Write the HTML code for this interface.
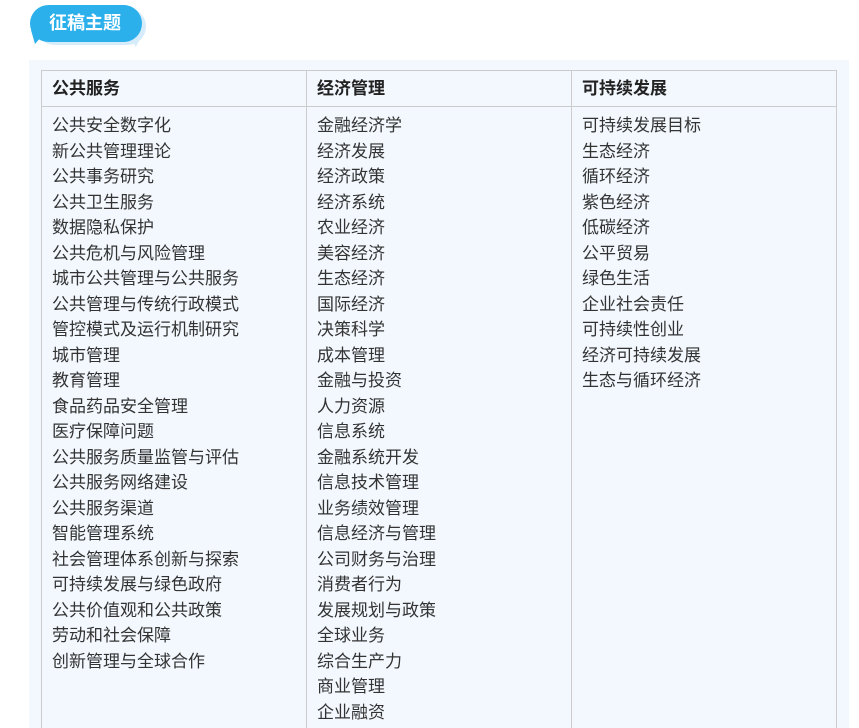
<!DOCTYPE html>
<html><head><meta charset="utf-8"><style>
html,body{margin:0;background:#fff;width:859px;height:728px;overflow:hidden;font-family:"Liberation Sans","Noto Sans CJK SC",sans-serif;position:relative}
.b2{position:absolute;left:36px;top:8px;width:110px;height:37px;background:#d6ecfa;border-radius:19px}
.b1{position:absolute;left:30px;top:5px;width:112px;height:37px;background:#2bb0ec;border-radius:19px;color:#fff;font-weight:bold;font-size:18px;line-height:37px;text-indent:19px}
.t1{position:absolute;left:31px;top:30px;width:0;height:0;border-left:4px solid transparent;border-right:12px solid transparent;border-top:14px solid #2bb0ec}
.t2{position:absolute;left:128px;top:34px;border-left:8px solid transparent;border-right:6px solid transparent;border-top:13px solid #d6ecfa}
.panel{position:absolute;left:29px;top:60px;width:820px;height:668px;background:#f3f8fe}
table{position:absolute;left:41px;top:70px;border-collapse:collapse;width:796px;table-layout:fixed}
td,th{border:1px solid #ccc;vertical-align:top;text-align:left;padding:0 10px;font-size:17px;color:#333}
th{height:35px;font-weight:bold;line-height:35px;color:#222}
td{line-height:25.5px;padding-top:6px;height:640px}
</style></head><body>
<div class="b2"></div><div class="t2"></div>
<div class="t1"></div>
<div class="b1">征稿主题</div>
<div class="panel"></div>
<table><tr><th style="width:244px">公共服务</th><th style="width:244px">经济管理</th><th>可持续发展</th></tr>
<tr><td>公共安全数字化<br>新公共管理理论<br>公共事务研究<br>公共卫生服务<br>数据隐私保护<br>公共危机与风险管理<br>城市公共管理与公共服务<br>公共管理与传统行政模式<br>管控模式及运行机制研究<br>城市管理<br>教育管理<br>食品药品安全管理<br>医疗保障问题<br>公共服务质量监管与评估<br>公共服务网络建设<br>公共服务渠道<br>智能管理系统<br>社会管理体系创新与探索<br>可持续发展与绿色政府<br>公共价值观和公共政策<br>劳动和社会保障<br>创新管理与全球合作</td>
<td>金融经济学<br>经济发展<br>经济政策<br>经济系统<br>农业经济<br>美容经济<br>生态经济<br>国际经济<br>决策科学<br>成本管理<br>金融与投资<br>人力资源<br>信息系统<br>金融系统开发<br>信息技术管理<br>业务绩效管理<br>信息经济与管理<br>公司财务与治理<br>消费者行为<br>发展规划与政策<br>全球业务<br>综合生产力<br>商业管理<br>企业融资</td>
<td>可持续发展目标<br>生态经济<br>循环经济<br>紫色经济<br>低碳经济<br>公平贸易<br>绿色生活<br>企业社会责任<br>可持续性创业<br>经济可持续发展<br>生态与循环经济</td></tr></table>
</body></html>
